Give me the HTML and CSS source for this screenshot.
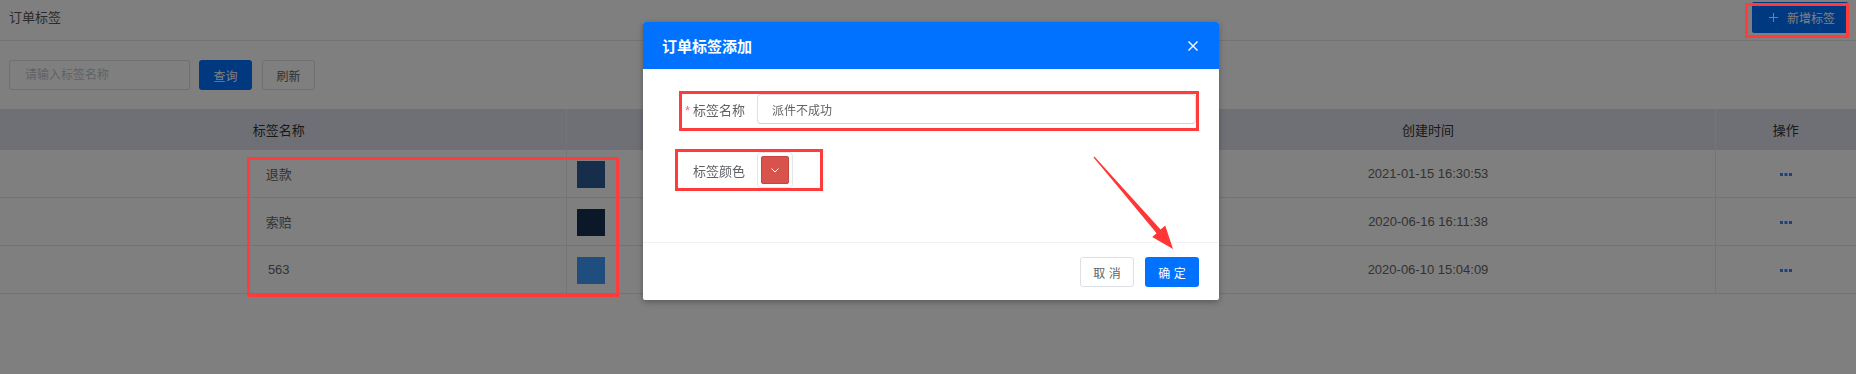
FILE: index.html
```html
<!DOCTYPE html>
<html lang="zh-CN">
<head>
    <meta charset="UTF-8">
    <meta name="viewport" content="width=device-width, initial-scale=1.0">
    <title>订单标签</title>
    <link rel="stylesheet" href="styles.css">
</head>
<body>

<div class="page">
    <div class="page-header">
        <span class="page-title">订单标签</span>
        <button class="btn-new">
            <svg width="9" height="9" viewBox="0 0 9 9"><path d="M4.5 0v9M0 4.5h9" stroke="#fff" stroke-width="1"/></svg>
            <span>新增标签</span>
        </button>
    </div>

    <div class="search-bar">
        <input type="text" class="search-input" placeholder="请输入标签名称">
        <button class="btn btn-primary">查询</button>
        <button class="btn btn-default">刷新</button>
    </div>

    <table class="tag-table">
        <colgroup>
            <col class="col-name">
            <col class="col-color">
            <col class="col-time">
            <col>
        </colgroup>
        <thead>
            <tr><th>标签名称</th><th>标签颜色</th><th>创建时间</th><th>操作</th></tr>
        </thead>
        <tbody>
            <tr>
                <td>退款</td>
                <td class="color-cell"><span class="swatch swatch-1"></span></td>
                <td>2021-01-15 16:30:53</td>
                <td><svg class="more" width="12" height="3" viewBox="0 0 12 3"><rect x="0" width="3" height="3"/><rect x="4.5" width="3" height="3"/><rect x="9" width="3" height="3"/></svg></td>
            </tr>
            <tr>
                <td>索赔</td>
                <td class="color-cell"><span class="swatch swatch-2"></span></td>
                <td>2020-06-16 16:11:38</td>
                <td><svg class="more" width="12" height="3" viewBox="0 0 12 3"><rect x="0" width="3" height="3"/><rect x="4.5" width="3" height="3"/><rect x="9" width="3" height="3"/></svg></td>
            </tr>
            <tr>
                <td>563</td>
                <td class="color-cell"><span class="swatch swatch-3"></span></td>
                <td>2020-06-10 15:04:09</td>
                <td><svg class="more" width="12" height="3" viewBox="0 0 12 3"><rect x="0" width="3" height="3"/><rect x="4.5" width="3" height="3"/><rect x="9" width="3" height="3"/></svg></td>
            </tr>
        </tbody>
    </table>
</div>

<div class="mask"></div>

<div class="modal">
    <div class="modal-header">
        <span class="modal-title">订单标签添加</span>
        <svg class="modal-close" width="10" height="10" viewBox="0 0 10 10"><path d="M0.5 0.5l9 9M9.5 0.5l-9 9" stroke="#fff" stroke-width="1.4"/></svg>
    </div>
    <div class="modal-body">
        <div class="form-item">
            <label class="form-label"><span class="required">*</span>标签名称</label>
            <input type="text" class="form-input" value="派件不成功">
        </div>
        <div class="form-item">
            <label class="form-label">标签颜色</label>
            <div class="color-picker">
                <span class="color-value">
                    <svg width="8" height="5" viewBox="0 0 8 5"><path d="M0.5 0.5L4 4l3.5-3.5" fill="none" stroke="#fff" stroke-width="1"/></svg>
                </span>
            </div>
        </div>
    </div>
    <div class="modal-footer">
        <button class="btn btn-default">取 消</button>
        <button class="btn btn-confirm">确 定</button>
    </div>
</div>

<!-- annotations drawn over the screenshot -->
<div class="mark mark-new"></div>
<div class="mark mark-name"></div>
<div class="mark mark-color"></div>
<div class="mark mark-rows"></div>
<svg class="arrow" width="1856" height="374" viewBox="0 0 1856 374">
    <polygon points="1094.4,156.6 1160.6,229.6 1165.2,225.6 1173,249 1152.2,237 1156.6,233.2 1093.6,157.4" fill="#ff3636"/>
</svg>

</body>
</html>
```

FILE: styles.css
```css
body {
    margin: 0;
    font-family: "Liberation Sans", "Noto Sans CJK SC", sans-serif;
    font-size: 13px;
    color: #606266;
    background: #fff;
    width: 1856px;
    height: 374px;
    overflow: hidden;
    position: relative;
}
.page-header {
    height: 41px;
    box-sizing: border-box;
    display: flex;
    justify-content: space-between;
    align-items: flex-start;
    padding: 2px 8px 0 9px;
    border-bottom: 1px solid #e6e6e6;
}
.page-title {
    line-height: 31px;
    font-size: 13px;
    color: #555;
}
.btn-new {
    width: 96px;
    height: 31px;
    display: inline-flex;
    align-items: center;
    justify-content: center;
    gap: 9px;
    background: #0072ff;
    color: #fff;
    border: none;
    border-radius: 2px;
    font-family: inherit;
    font-size: 12px;
    padding: 0 0 0 4px;
}
.search-bar {
    display: flex;
    align-items: center;
    padding: 19px 9px;
}
.search-input {
    width: 181px;
    height: 30px;
    box-sizing: border-box;
    border: 1px solid #dcdfe6;
    border-radius: 2px;
    padding: 0 15px;
    font-family: inherit;
    font-size: 12px;
    margin-right: 9px;
}
.search-input::placeholder {
    color: #c0c4cc;
}
.btn {
    height: 30px;
    box-sizing: border-box;
    padding: 0;
    font-family: inherit;
    font-size: 12px;
    border-radius: 3px;
    cursor: pointer;
}
.search-bar .btn {
    width: 53px;
}
.search-bar .btn-primary {
    margin-right: 10px;
}
.btn-primary {
    background: #0072ff;
    color: #fff;
    border: none;
}
.btn-default {
    background: #fff;
    color: #606266;
    border: 1px solid #dcdfe6;
}
.tag-table {
    width: 100%;
    table-layout: fixed;
    border-collapse: collapse;
}
.col-name { width: 566px; }
.col-color { width: 575px; }
.col-time { width: 574px; }
.tag-table th {
    height: 41px;
    padding: 0;
    background: #dfe1ea;
    color: #333;
    font-weight: normal;
    font-size: 13px;
    border-right: 1px solid #ebedf2;
}
.tag-table td {
    height: 47px;
    padding: 0;
    text-align: center;
    color: #666;
    border-bottom: 1px solid #e6e6e6;
    border-right: 1px solid #ebebeb;
}
.tag-table th:first-child,
.tag-table td:first-child {
    padding-right: 8px;
}
.tag-table th:last-child,
.tag-table td:last-child {
    border-right: none;
}
.tag-table td.color-cell {
    text-align: left;
    padding-left: 10px;
}
.swatch {
    display: inline-block;
    width: 28px;
    height: 27px;
    vertical-align: middle;
    margin-top: 2px;
}
.swatch-1 { background: #2e5c94; }
.swatch-2 { background: #143050; }
.swatch-3 { background: #3e9cfc; }
.more {
    fill: #3a86ff;
    vertical-align: middle;
}
.mask {
    position: fixed;
    inset: 0;
    background: rgba(0, 0, 0, 0.5);
}
.modal {
    position: absolute;
    left: 643px;
    top: 22px;
    width: 576px;
    background: #fff;
    border-radius: 2px;
    box-shadow: 0 2px 6px rgba(0, 0, 0, 0.3);
    overflow: hidden;
}
.modal-header {
    height: 47px;
    background: #0072ff;
    display: flex;
    align-items: center;
    justify-content: space-between;
    padding: 0 21px 0 19px;
}
.modal-title {
    color: #fff;
    font-size: 15px;
    font-weight: bold;
}
.modal-body {
    padding: 25px 23px 54px 20px;
}
.form-item {
    display: flex;
    align-items: center;
}
.form-item + .form-item {
    margin-top: 28px;
}
.form-label {
    width: 94px;
    box-sizing: border-box;
    padding-right: 12px;
    text-align: right;
    font-size: 13px;
    color: #606266;
}
.required {
    color: #f56c6c;
    margin-right: 3px;
}
.form-input {
    flex: 1;
    height: 30px;
    box-sizing: border-box;
    border: 1px solid #dcdfe6;
    border-bottom-color: #cfd2da;
    border-radius: 4px;
    padding: 0 14px;
    font-family: inherit;
    font-size: 12px;
    color: #606266;
}
.color-picker {
    width: 36px;
    height: 36px;
    box-sizing: border-box;
    border: 1px solid #e6e6e6;
    border-radius: 4px;
    padding: 3px;
}
.color-value {
    display: flex;
    align-items: center;
    justify-content: center;
    width: 28px;
    height: 28px;
    box-sizing: border-box;
    background: #d8534b;
    border: 1px solid #c4463e;
    border-radius: 2px;
}
.modal-footer {
    border-top: 1px solid #f2f2f2;
    display: flex;
    justify-content: flex-end;
    gap: 11px;
    padding: 14px 20px 13px;
}
.modal-footer .btn {
    width: 54px;
}
.btn-confirm {
    background: #0072ff;
    color: #fff;
    border: none;
}
.mark {
    position: absolute;
    border: 3px solid #ff3b3b;
    box-sizing: border-box;
}
.mark-new { left: 1745px; top: 3px; width: 104px; height: 35px; }
.mark-name { left: 679px; top: 91px; width: 520px; height: 40px; }
.mark-color { left: 675px; top: 149px; width: 148px; height: 42px; }
.mark-rows { left: 247px; top: 157px; width: 372px; height: 140px; }
.arrow {
    position: absolute;
    left: 0;
    top: 0;
    pointer-events: none;
}
```
